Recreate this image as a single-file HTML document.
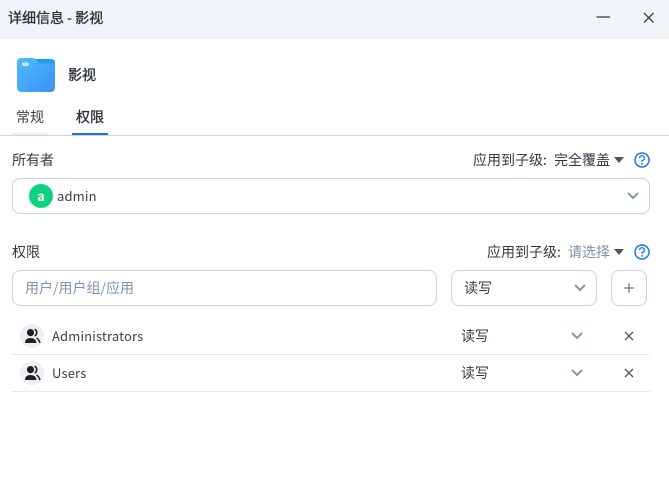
<!DOCTYPE html>
<html><head><meta charset="utf-8">
<style>
html,body{margin:0;padding:0;background:#fff;}
body{width:669px;height:503px;position:relative;overflow:hidden;font-family:"Noto Sans CJK SC","Liberation Sans",sans-serif;font-size:14px;color:#333a45;}
.a{position:absolute;white-space:nowrap;line-height:20px;}
.box{position:absolute;box-sizing:border-box;border:1px solid #c6d2e0;border-radius:8px;background:#fff;}
.line{position:absolute;height:1px;background:#e4e9f0;}
svg{position:absolute;overflow:visible;}
.en{font-size:13px;letter-spacing:.15px;color:#3a4049;}
.m{color:#2c323b;-webkit-text-stroke:.35px #2c323b;}
</style></head><body>
<div class="a" style="left:0;top:0;width:669px;height:39px;background:#f0f4f9;"></div>
<div class="a m" style="left:8px;top:8px;">详细信息 - 影视</div>
<svg style="left:596px;top:12px" width="16" height="10"><path d="M0.5 5H14" stroke="#5a6068" stroke-width="1.6"/></svg>
<svg style="left:643px;top:12px" width="12" height="12"><path d="M1 1L10.5 10.5M10.5 1L1 10.5" stroke="#3a4049" stroke-width="1.3"/></svg>

<svg style="left:17px;top:58px" width="38" height="34" viewBox="0 0 38 34">
<defs><linearGradient id="f" x1="0" y1="0" x2="1" y2="1"><stop offset="0" stop-color="#4bbcfd"/><stop offset="1" stop-color="#3f8ff5"/></linearGradient></defs>
<path d="M15 1H34Q38 1 38 5V12H15Z" fill="#1a9cf5"/>
<path d="M4 0H15Q18 0 20 2.5Q22.5 5.5 26 5.5H38V29Q38 34 33 34H5Q0 34 0 29V4Q0 0 4 0Z" fill="url(#f)"/>
<rect x="5" y="4.5" width="7" height="3.5" rx="1.7" fill="#c9ebff"/>
</svg>
<div class="a m" style="left:68px;top:65px;">影视</div>

<div class="a" style="left:16px;top:107px;color:#3a4049;">常规</div>
<div class="a m" style="left:76px;top:107px;">权限</div>
<div class="a" style="left:12px;top:133px;width:36px;height:2px;background:#eef0f3;"></div>
<div class="a" style="left:72px;top:133px;width:36px;height:2px;background:#1f6fdc;"></div>
<div class="line" style="left:0;top:135px;width:669px;background:#ccd3db;"></div>

<div class="a" style="left:12px;top:150px;">所有者</div>
<div class="a" style="left:473px;top:150px;">应用到子级:</div>
<div class="a" style="left:554px;top:150px;">完全覆盖</div>
<svg style="left:613.5px;top:157px" width="10" height="6"><path d="M0 0H10L5 6Z" fill="#4b5563"/></svg>
<svg style="left:634px;top:152px" width="16" height="16" viewBox="0 0 16 16"><circle cx="8" cy="8" r="7" fill="none" stroke="#1f78e6" stroke-width="1.5"/><path d="M5.6 6.1A2.4 2.4 0 1 1 8 8.5V9.8" fill="none" stroke="#1f78e6" stroke-width="1.4"/><circle cx="8" cy="11.8" r=".95" fill="#1f78e6"/></svg>

<div class="box" style="left:12px;top:178px;width:638px;height:36px;"></div>
<div class="a" style="left:29px;top:184px;width:24px;height:24px;border-radius:50%;background:#0fd27f;color:#fff;font-weight:bold;font-size:13px;line-height:24px;text-align:center;">a</div>
<div class="a en" style="left:57px;top:186px;">admin</div>
<svg style="left:627px;top:192px" width="12" height="8"><path d="M1 1L6 6L11 1" fill="none" stroke="#8495ad" stroke-width="2"/></svg>

<div class="a" style="left:12px;top:242px;">权限</div>
<div class="a" style="left:487px;top:242px;">应用到子级:</div>
<div class="a" style="left:568px;top:242px;color:#7f91a8;">请选择</div>
<svg style="left:613.5px;top:249px" width="10" height="6"><path d="M0 0H10L5 6Z" fill="#4b5563"/></svg>
<svg style="left:634px;top:244px" width="16" height="16" viewBox="0 0 16 16"><circle cx="8" cy="8" r="7" fill="none" stroke="#1f78e6" stroke-width="1.5"/><path d="M5.6 6.1A2.4 2.4 0 1 1 8 8.5V9.8" fill="none" stroke="#1f78e6" stroke-width="1.4"/><circle cx="8" cy="11.8" r=".95" fill="#1f78e6"/></svg>

<div class="box" style="left:12px;top:270px;width:425px;height:36px;"></div>
<div class="a" style="left:25px;top:278px;color:#8093ab;">用户/用户组/应用</div>
<div class="box" style="left:451px;top:270px;width:146px;height:36px;"></div>
<div class="a" style="left:464px;top:278px;">读写</div>
<svg style="left:574px;top:284px" width="12" height="8"><path d="M1 1L6 6L11 1" fill="none" stroke="#8495ad" stroke-width="2"/></svg>
<div class="box" style="left:611px;top:270px;width:36px;height:36px;"></div>
<svg style="left:623px;top:282px" width="12" height="12"><path d="M6 1.2V10.8M1.2 6H10.8" stroke="#7d8a9c" stroke-width="1.5"/></svg>

<div class="a" style="left:20px;top:324px;width:24px;height:24px;border-radius:50%;background:#eef0f3;"></div>
<svg style="left:20px;top:324px" width="24" height="24" viewBox="0 0 24 24"><circle cx="10.5" cy="8.6" r="3.6" fill="#1c2128"/><path d="M14.6 5.2A3.8 3.8 0 0 1 14.6 12" fill="none" stroke="#1c2128" stroke-width="1.6"/><path d="M5 19Q5 14 10.5 14Q16 14 16.5 19Z" fill="#1c2128"/><path d="M16.5 14Q19 15.5 20 19" fill="none" stroke="#1c2128" stroke-width="1.5"/></svg>
<div class="a en" style="left:52px;top:326px;">Administrators</div>
<div class="a" style="left:461px;top:326px;">读写</div>
<svg style="left:571px;top:332px" width="12" height="8"><path d="M1 1L6 6L11 1" fill="none" stroke="#8495ad" stroke-width="2"/></svg>
<svg style="left:624px;top:331px" width="10" height="10"><path d="M1 1L9 9M9 1L1 9" stroke="#4b5563" stroke-width="1.3"/></svg>
<div class="line" style="left:12px;top:354px;width:638px;"></div>

<div class="a" style="left:20px;top:361px;width:24px;height:24px;border-radius:50%;background:#eef0f3;"></div>
<svg style="left:20px;top:361px" width="24" height="24" viewBox="0 0 24 24"><circle cx="10.5" cy="8.6" r="3.6" fill="#1c2128"/><path d="M14.6 5.2A3.8 3.8 0 0 1 14.6 12" fill="none" stroke="#1c2128" stroke-width="1.6"/><path d="M5 19Q5 14 10.5 14Q16 14 16.5 19Z" fill="#1c2128"/><path d="M16.5 14Q19 15.5 20 19" fill="none" stroke="#1c2128" stroke-width="1.5"/></svg>
<div class="a en" style="left:52px;top:363px;">Users</div>
<div class="a" style="left:461px;top:363px;">读写</div>
<svg style="left:571px;top:369px" width="12" height="8"><path d="M1 1L6 6L11 1" fill="none" stroke="#8495ad" stroke-width="2"/></svg>
<svg style="left:624px;top:368px" width="10" height="10"><path d="M1 1L9 9M9 1L1 9" stroke="#4b5563" stroke-width="1.3"/></svg>
<div class="line" style="left:12px;top:391px;width:638px;"></div>
</body></html>
